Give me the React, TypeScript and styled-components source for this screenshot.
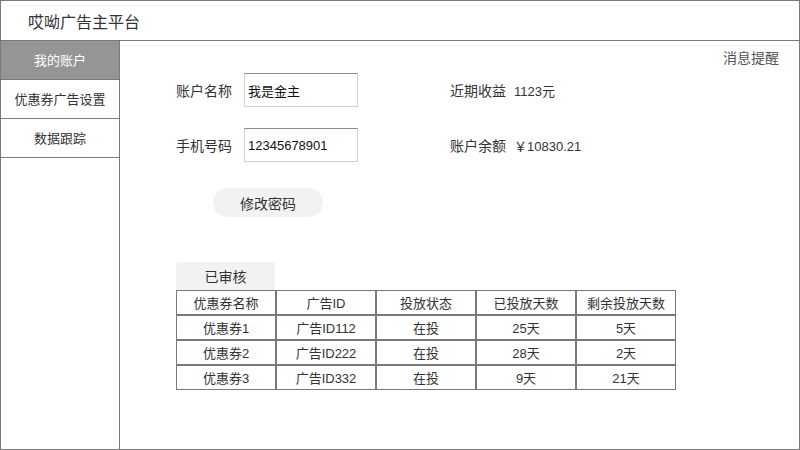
import * as React from 'react';
import styled, { createGlobalStyle } from 'styled-components';

const GlobalStyle = createGlobalStyle`
  html, body {
    margin: 0;
    padding: 0;
    background: #ffffff;
  }
  * {
    box-sizing: border-box;
  }
  body {
    font-family: "Liberation Sans", "Noto Sans CJK SC", sans-serif;
    color: #333333;
  }
`;

const Frame = styled.div`
  width: 800px;
  height: 450px;
  border: 1px solid #797979;
  display: flex;
  flex-direction: column;
  background: #ffffff;
`;

const Header = styled.div`
  height: 40px;
  flex-shrink: 0;
  border-bottom: 1px solid #797979;
  display: flex;
  align-items: center;
  padding-left: 27px;
  font-size: 16px;
  color: #333333;
`;

const Body = styled.div`
  flex: 1;
  display: flex;
  min-height: 0;
`;

const Sidebar = styled.div`
  width: 119px;
  flex-shrink: 0;
  border-right: 1px solid #797979;
  display: flex;
  flex-direction: column;
`;

const NavItem = styled.div<{ $active?: boolean }>`
  height: 39px;
  border-bottom: 1px solid #797979;
  display: flex;
  align-items: center;
  justify-content: center;
  font-size: 13px;
  padding-bottom: 2px;
  background: ${p => (p.$active ? '#959595' : '#ffffff')};
  color: ${p => (p.$active ? '#ffffff' : '#333333')};
`;

const Content = styled.div`
  flex: 1;
  display: flex;
  flex-direction: column;
  padding: 8px 20px 0 56px;
`;

const NoticeBar = styled.div`
  display: flex;
  justify-content: flex-end;
  font-size: 14px;
  line-height: 18px;
  color: #555555;
`;

const FormRow = styled.div<{ $first?: boolean }>`
  display: flex;
  align-items: center;
  height: 34px;
  margin-top: ${p => (p.$first ? '6px' : '21px')};
`;

const Field = styled.div`
  display: flex;
  align-items: center;
  width: 274px;
`;

const Label = styled.span`
  width: 68px;
  font-size: 14px;
  color: #333333;
`;

const TextBox = styled.div`
  width: 114px;
  height: 34px;
  border: 1px solid #d0d0d0;
  border-top-color: #8c8c8c;
  display: flex;
  align-items: center;
  padding-left: 3px;
  font-size: 13px;
  color: #111111;
`;

const Stat = styled.div`
  display: flex;
  align-items: center;
  font-size: 14px;
`;

const StatLabel = styled.span`
  width: 64px;
`;

const StatValue = styled.span`
  font-size: 13px;
`;

const PillButton = styled.div`
  margin: 26px 0 0 37px;
  width: 110px;
  height: 29px;
  border-radius: 15px;
  background: #f2f2f2;
  display: flex;
  align-items: center;
  justify-content: center;
  font-size: 14px;
  color: #333333;
`;

const Tab = styled.div`
  margin-top: 45px;
  width: 99px;
  height: 28px;
  background: #f2f2f2;
  border-radius: 3px 3px 0 0;
  display: flex;
  align-items: center;
  justify-content: center;
  font-size: 14px;
  color: #333333;
`;

const Table = styled.table`
  border-collapse: separate;
  border-spacing: 0;
  width: 500px;
  table-layout: fixed;
`;

const Cell = styled.td`
  width: 100px;
  height: 25px;
  padding: 0;
  border: 1px solid #797979;
  text-align: center;
  vertical-align: middle;
  font-size: 13px;
  color: #333333;
`;

const columns = ['优惠券名称', '广告ID', '投放状态', '已投放天数', '剩余投放天数'];

const rows = [
  ['优惠券1', '广告ID112', '在投', '25天', '5天'],
  ['优惠券2', '广告ID222', '在投', '28天', '2天'],
  ['优惠券3', '广告ID332', '在投', '9天', '21天'],
];

const App: React.FunctionComponent = () => (
  <React.Fragment>
    <GlobalStyle />
    <Frame>
      <Header>哎呦广告主平台</Header>
      <Body>
        <Sidebar>
          <NavItem $active>我的账户</NavItem>
          <NavItem>优惠券广告设置</NavItem>
          <NavItem>数据跟踪</NavItem>
        </Sidebar>
        <Content>
          <NoticeBar>消息提醒</NoticeBar>
          <FormRow $first>
            <Field>
              <Label>账户名称</Label>
              <TextBox>我是金主</TextBox>
            </Field>
            <Stat>
              <StatLabel>近期收益</StatLabel>
              <StatValue>1123元</StatValue>
            </Stat>
          </FormRow>
          <FormRow>
            <Field>
              <Label>手机号码</Label>
              <TextBox>12345678901</TextBox>
            </Field>
            <Stat>
              <StatLabel>账户余额</StatLabel>
              <StatValue>￥10830.21</StatValue>
            </Stat>
          </FormRow>
          <PillButton>修改密码</PillButton>
          <Tab>已审核</Tab>
          <Table>
            <tbody>
              <tr>
                {columns.map(c => (
                  <Cell key={c}>{c}</Cell>
                ))}
              </tr>
              {rows.map(r => (
                <tr key={r[0]}>
                  {r.map((v, i) => (
                    <Cell key={i}>{v}</Cell>
                  ))}
                </tr>
              ))}
            </tbody>
          </Table>
        </Content>
      </Body>
    </Frame>
  </React.Fragment>
);

export default App;
